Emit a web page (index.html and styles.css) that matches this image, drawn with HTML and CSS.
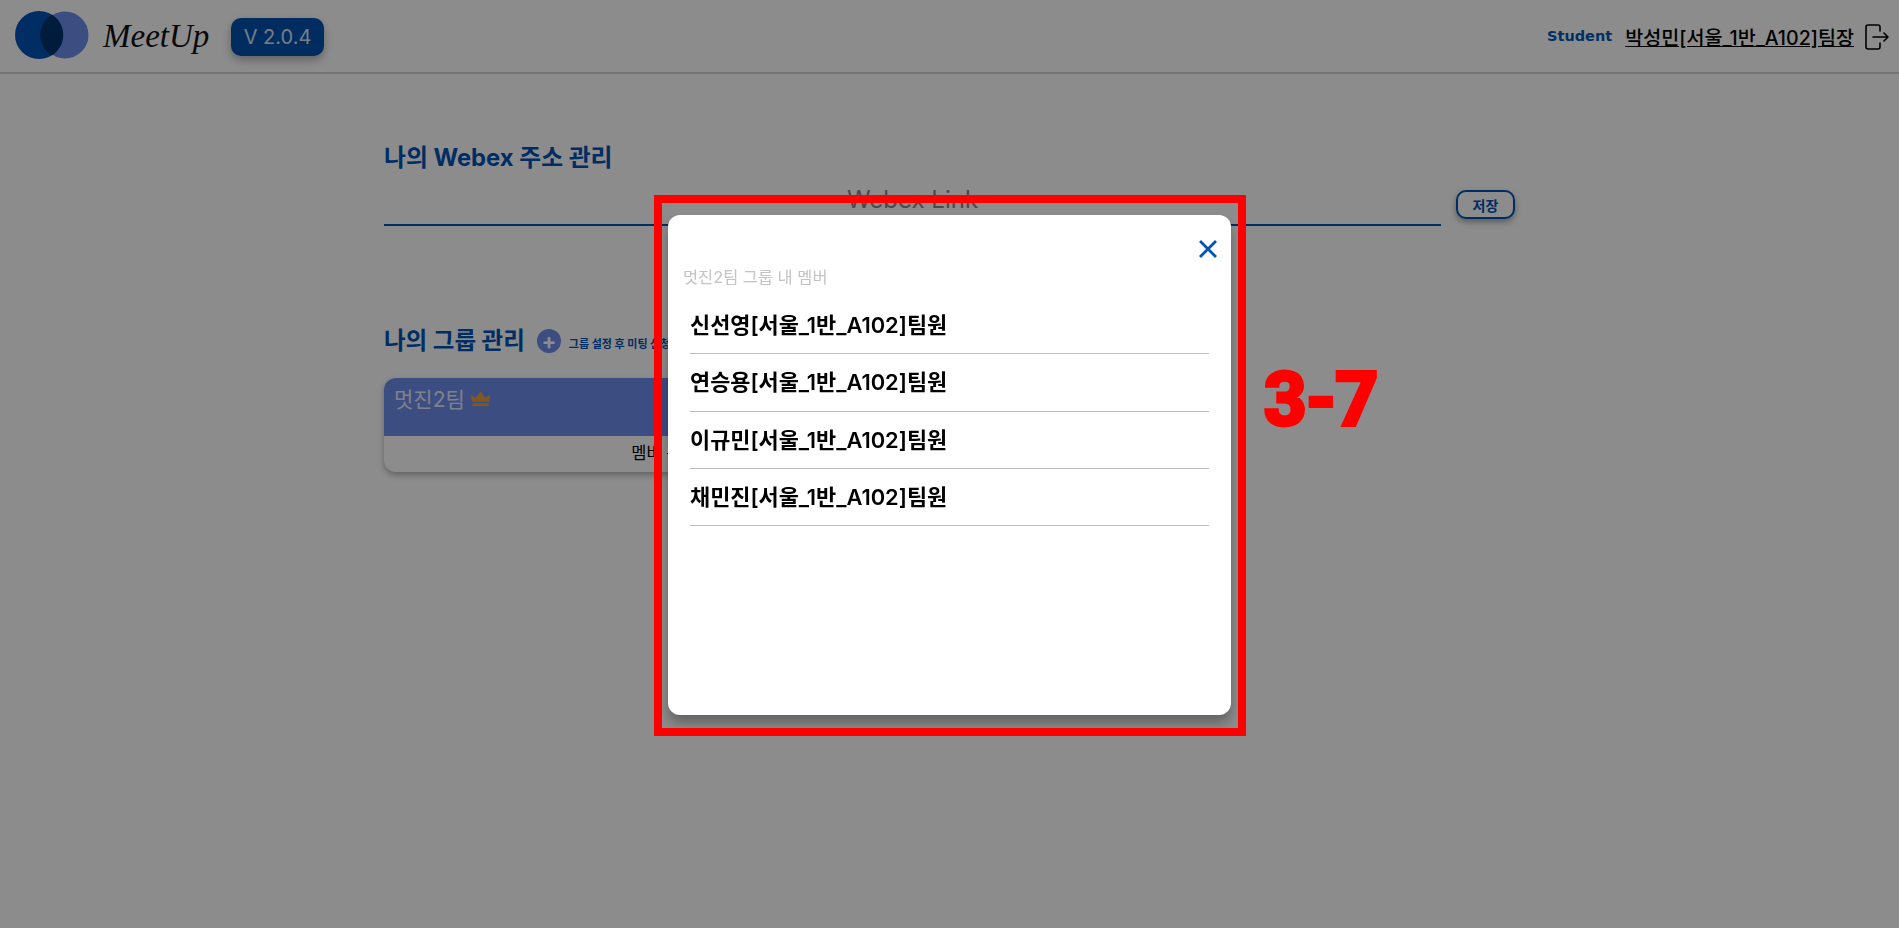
FILE: index.html
```html
<!DOCTYPE html>
<html lang="ko">
<head>
  <meta charset="UTF-8">
  <title>MeetUp</title>
  <meta name="viewport" content="width=device-width, initial-scale=1.0">
  <link rel="stylesheet" href="styles.css">
</head>
<body>

  <div class="top-bar">
    <div class="brand">
      <div class="logo">
        <svg width="74" height="48" viewBox="0 0 74 48">
          <circle cx="50" cy="24" r="23.5" fill="#6e8cec"/>
          <circle cx="24" cy="24" r="24" fill="#0052b4"/>
          <path d="M37 3.7a24 24 0 0 1 0 40.6a23.5 23.5 0 0 1 0-40.6z" fill="#00336e"/>
        </svg>
      </div>
      <span class="brand-name">MeetUp</span>
      <span class="version">V 2.0.4</span>
    </div>
    <div class="user">
      <span class="role">Student</span>
      <a class="user-name" href="#">박성민[서울_1반_A102]팀장</a>
      <svg class="logout" width="24" height="26" viewBox="0 0 24 26" fill="none" stroke="#000" stroke-width="1.6" stroke-linecap="round" stroke-linejoin="round">
        <path d="M15 7V3a2 2 0 0 0-2-2H3a2 2 0 0 0-2 2v20a2 2 0 0 0 2 2h10a2 2 0 0 0 2-2v-4"/>
        <path d="M8 13h15M19 9l4 4-4 4"/>
      </svg>
    </div>
  </div>

  <div class="content">
    <h2 class="section-title">나의 Webex 주소 관리</h2>
    <div class="link-row">
      <div class="link-input">Webex Link</div>
      <button class="save-button">저장</button>
    </div>

    <div class="group-head">
      <h2 class="section-title group-title">나의 그룹 관리</h2>
      <span class="add-group">+</span>
      <span class="group-hint">그룹 설정 후 미팅 신청이 가능합니다</span>
    </div>
    <div class="group-card">
      <div class="group-top">
        <span>멋진2팀</span>
        <svg width="19" height="16" viewBox="0 0 20 16" fill="#e9a23b">
          <path d="M1 11 0 3.5l5 3.2L10 0l5 6.7 5-3.2-1 7.5z"/>
          <rect x="1.5" y="12.5" width="17" height="3"/>
        </svg>
      </div>
      <div class="group-bottom">멤버 목록</div>
    </div>
  </div>

  <div class="overlay">
    <div class="modal">
      <div class="modal-close">
        <svg width="18" height="18" viewBox="0 0 18 18" stroke="#0054b3" stroke-width="2.8" stroke-linecap="square">
          <path d="M2 2l14 14M16 2 2 16"/>
        </svg>
      </div>
      <p class="modal-title">멋진2팀 그룹 내 멤버</p>
      <ul class="member-list">
        <li>신선영[서울_1반_A102]팀원</li>
        <li>연승용[서울_1반_A102]팀원</li>
        <li>이규민[서울_1반_A102]팀원</li>
        <li>채민진[서울_1반_A102]팀원</li>
      </ul>
    </div>
  </div>

  <div class="mark-box"></div>
  <div class="mark-label">3-7</div>

</body>
</html>
```

FILE: styles.css
```css
* { margin: 0; padding: 0; box-sizing: border-box; }
body {
  background: white;
  font-family: Inter, "Noto Sans CJK KR", sans-serif;
  color: black;
  height: 928px;
  overflow: hidden;
}
.top-bar {
  height: 74px;
  padding: 0 10px 0 15px;
  display: flex;
  justify-content: space-between;
  align-items: center;
  border-bottom: 2px solid #d6d6d6;
}
.brand {
  display: flex;
  align-items: center;
}
.logo {
  display: flex;
  margin-top: -2px;
}
.brand-name {
  margin-left: 14px;
  width: 128px;
  font-family: "Liberation Serif", serif;
  font-style: italic;
  font-size: 33px;
  color: #111;
}
.version {
  width: 93px;
  height: 38px;
  display: flex;
  align-items: center;
  justify-content: center;
  background: #0050b0;
  color: #d8e4f5;
  border-radius: 10px;
  font-size: 20px;
  box-shadow: 0 4px 8px rgba(0, 0, 0, 0.3);
  margin-top: 2px;
}
.user {
  display: flex;
  align-items: center;
}
.role {
  font-family: "DejaVu Sans", sans-serif;
  font-weight: bold;
  font-size: 14.5px;
  color: #0058b8;
  margin-right: 13px;
}
.user-name {
  color: black;
  font-size: 19.6px;
  font-weight: 500;
}
.logout {
  margin-left: 11px;
  margin-top: 2px;
}
.content {
  width: 1131px;
  margin: 0 auto;
  padding-top: 69px;
}
.section-title {
  color: #0052b4;
  font-size: 23.8px;
  font-weight: 700;
  line-height: 30px;
}
.group-title {
  font-size: 23.5px;
}
.link-row {
  display: flex;
  align-items: flex-start;
  gap: 15px;
  margin-top: 10px;
}
.link-input {
  flex: 1;
  height: 43px;
  border-bottom: 2px solid #0052b4;
  text-align: center;
  font-size: 24px;
  color: #888;
  line-height: 34px;
}
.save-button {
  width: 59px;
  height: 29px;
  margin-top: 7px;
  background: white;
  border: 2px solid #0052b4;
  border-radius: 10px;
  color: #0052b4;
  font-family: inherit;
  font-size: 14px;
  font-weight: 700;
  box-shadow: 0 3px 6px rgba(0, 0, 0, 0.35);
}
.group-head {
  display: flex;
  align-items: center;
  margin-top: 100px;
}
.add-group {
  width: 24px;
  height: 24px;
  margin-left: 12px;
  border-radius: 50%;
  background: #6e8cec;
  color: white;
  display: flex;
  align-items: center;
  justify-content: center;
  font-size: 22px;
  font-weight: 700;
  line-height: 1;
}
.group-hint {
  margin-left: 8px;
  margin-top: 4px;
  font-size: 11px;
  font-weight: 700;
  color: #0052b4;
}
.group-card {
  width: 560px;
  margin-top: 22px;
  border-radius: 12px;
  box-shadow: 0 3px 6px rgba(0, 0, 0, 0.3);
  overflow: hidden;
}
.group-top {
  height: 58px;
  padding: 5px 10px 0;
  background: #6e8cec;
  color: #e6ebfa;
  display: flex;
  align-items: flex-start;
  gap: 6px;
  font-size: 21px;
}
.group-top svg {
  margin-top: 8px;
}
.group-bottom {
  height: 36px;
  text-align: center;
  font-size: 16.5px;
  line-height: 34px;
}
.overlay {
  position: fixed;
  top: 0;
  left: 0;
  width: 100%;
  height: 100%;
  background: rgba(0, 0, 0, 0.45);
  display: flex;
  align-items: center;
  justify-content: center;
}
.modal {
  width: 563px;
  height: 500px;
  margin-top: 2px;
  background: white;
  border-radius: 12px;
  box-shadow: 0 8px 12px rgba(0, 0, 0, 0.3);
  padding: 25px 22px 0 15px;
}
.modal-close {
  display: flex;
  justify-content: flex-end;
  margin-right: -8px;
}
.modal-title {
  margin-top: 6px;
  font-size: 16.4px;
  color: #c4c4c4;
}
.member-list {
  list-style: none;
  margin-left: 7px;
  margin-top: 9px;
}
.member-list li {
  height: 57.3px;
  padding-top: 13px;
  border-bottom: 1px solid #bdbdbd;
  font-size: 21.9px;
  font-weight: 600;
  line-height: 30px;
}
.mark-box {
  position: fixed;
  left: 654px;
  top: 195px;
  width: 592px;
  height: 541px;
  border: 8px solid #ff0000;
}
.mark-label {
  position: fixed;
  left: 1264px;
  top: 355px;
  font-family: Roboto, sans-serif;
  font-weight: 700;
  font-size: 74px;
  line-height: 90px;
  color: #ff0000;
  -webkit-text-stroke: 4px #ff0000;
}
```
